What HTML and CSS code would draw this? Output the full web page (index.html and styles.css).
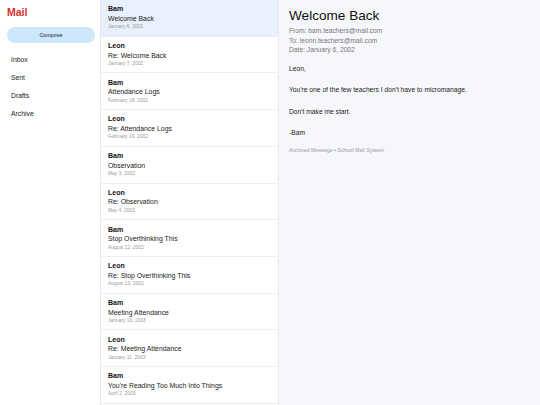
FILE: index.html
```html
<!DOCTYPE html>
<html lang="en">
<head>
    <meta charset="UTF-8">
    <meta name="viewport" content="width=device-width, initial-scale=1.0">
    <title>Mail</title>
    <link rel="stylesheet" href="styles.css">
</head>
<body>
    <div class="app">
        <aside class="sidebar">
            <h1 class="logo">Mail</h1>
            <button class="compose">Compose</button>
            <nav class="nav">
                <a class="nav-item">Inbox</a>
                <a class="nav-item">Sent</a>
                <a class="nav-item">Drafts</a>
                <a class="nav-item">Archive</a>
            </nav>
        </aside>

        <section class="list">
            <div class="item active">
                <div class="from">Bam</div>
                <div class="subject">Welcome Back</div>
                <div class="date">January 6, 2002</div>
            </div>
            <div class="item">
                <div class="from">Leon</div>
                <div class="subject">Re: Welcome Back</div>
                <div class="date">January 7, 2002</div>
            </div>
            <div class="item">
                <div class="from">Bam</div>
                <div class="subject">Attendance Logs</div>
                <div class="date">February 18, 2002</div>
            </div>
            <div class="item">
                <div class="from">Leon</div>
                <div class="subject">Re: Attendance Logs</div>
                <div class="date">February 19, 2002</div>
            </div>
            <div class="item">
                <div class="from">Bam</div>
                <div class="subject">Observation</div>
                <div class="date">May 3, 2002</div>
            </div>
            <div class="item">
                <div class="from">Leon</div>
                <div class="subject">Re: Observation</div>
                <div class="date">May 4, 2002</div>
            </div>
            <div class="item">
                <div class="from">Bam</div>
                <div class="subject">Stop Overthinking This</div>
                <div class="date">August 12, 2002</div>
            </div>
            <div class="item">
                <div class="from">Leon</div>
                <div class="subject">Re: Stop Overthinking This</div>
                <div class="date">August 13, 2002</div>
            </div>
            <div class="item">
                <div class="from">Bam</div>
                <div class="subject">Meeting Attendance</div>
                <div class="date">January 10, 2003</div>
            </div>
            <div class="item">
                <div class="from">Leon</div>
                <div class="subject">Re: Meeting Attendance</div>
                <div class="date">January 11, 2003</div>
            </div>
            <div class="item">
                <div class="from">Bam</div>
                <div class="subject">You're Reading Too Much Into Things</div>
                <div class="date">April 2, 2003</div>
            </div>
        </section>

        <main class="reader">
            <h2 class="title">Welcome Back</h2>
            <div class="meta">
                <div>From: bam.teachers@mail.com</div>
                <div>To: leonn.teachers@mail.com</div>
                <div>Date: January 6, 2002</div>
            </div>
            <div class="body">
                <p>Leon,</p>
                <p>You're one of the few teachers I don't have to micromanage.</p>
                <p>Don't make me start.</p>
                <p>-Bam</p>
            </div>
            <div class="footer">Archived Message • School Mail System</div>
        </main>
    </div>
</body>
</html>
```

FILE: styles.css
```css
* {
    margin: 0;
    padding: 0;
    box-sizing: border-box;
}

html, body {
    width: 100%;
    height: 100%;
    overflow: hidden;
}

body {
    font-family: "Liberation Sans", Arial, sans-serif;
    color: #111;
    background: #fff;
}

.app {
    display: flex;
    height: 405px;
}

/* Barra lateral */
.sidebar {
    width: 101px;
    flex-shrink: 0;
    border-right: 1px solid #e6e8ec;
    padding: 5px 6px 0 7px;
}

.logo {
    font-size: 10.5px;
    line-height: 14px;
    font-weight: bold;
    color: #d63031;
}

.compose {
    display: block;
    width: 88px;
    height: 16px;
    margin-top: 8px;
    border: none;
    border-radius: 8px;
    background: #cde7fb;
    font-family: inherit;
    font-size: 5.4px;
    color: #222;
}

.nav {
    display: flex;
    flex-direction: column;
    margin-top: 8px;
    padding-left: 4px;
}

.nav-item {
    font-size: 6.8px;
    line-height: 18px;
    color: #222;
}

/* Lista de mensajes */
.list {
    width: 178px;
    flex-shrink: 0;
    border-right: 1px solid #e6e8ec;
    overflow: hidden;
}

.item {
    padding: 4.3px 7px 4px 7px;
    border-bottom: 1px solid #eceef1;
}

.item.active {
    background: #e8f0fd;
}

.from {
    font-size: 7px;
    line-height: 9.6px;
    font-weight: bold;
    color: #111;
}

.subject {
    font-size: 6.9px;
    line-height: 9.4px;
    color: #222;
}

.date {
    font-size: 4.9px;
    line-height: 8.4px;
    color: #999;
}

/* Panel de lectura */
.reader {
    flex: 1;
    background: #f6f7fb;
    padding: 7px 10px;
}

.title {
    font-size: 13.6px;
    line-height: 18px;
    font-weight: normal;
    color: #111;
}

.meta {
    margin-top: 1.2px;
    font-size: 6.7px;
    line-height: 9.6px;
    color: #777;
}

.body {
    margin-top: 9px;
    font-size: 6.7px;
    line-height: 10px;
    color: #222;
}

.body p + p {
    margin-top: 11.3px;
}

.footer {
    margin-top: 8px;
    font-size: 5.3px;
    line-height: 8px;
    color: #999;
}
```
